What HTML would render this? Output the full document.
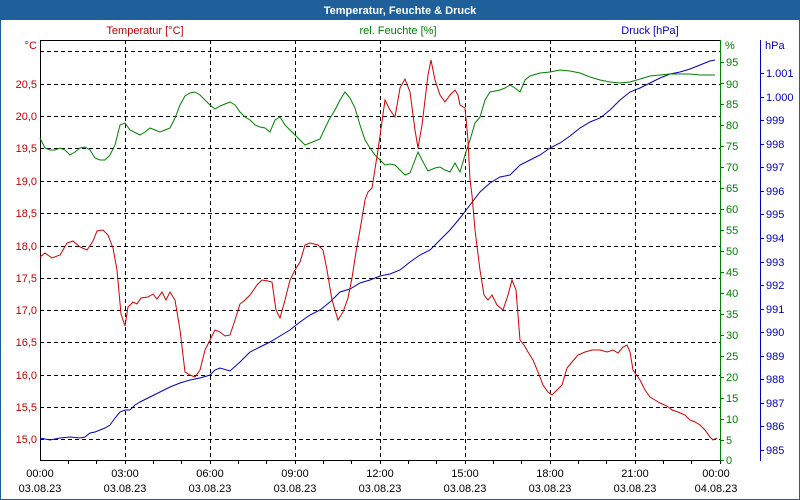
<!DOCTYPE html>
<html><head><meta charset="utf-8"><style>
html,body{margin:0;padding:0;background:#fff}
svg{display:block;font-family:"Liberation Sans",sans-serif;font-size:11px}
</style></head><body>
<svg width="800" height="500" viewBox="0 0 800 500" xmlns="http://www.w3.org/2000/svg">
<rect x="0" y="0" width="800" height="500" fill="#fff"/>
<rect x="0.5" y="0.5" width="799" height="499" fill="none" stroke="#1f5f9a"/>
<rect x="0" y="0" width="800" height="20" fill="#1f5f9a"/>
<text x="400" y="14" text-anchor="middle" fill="#fff" font-weight="bold" font-size="11">Temperatur, Feuchte &amp; Druck</text>

<text x="145" y="34" text-anchor="middle" fill="#c00000">Temperatur [°C]</text>
<text x="398" y="34" text-anchor="middle" fill="#008000">rel. Feuchte [%]</text>
<text x="650" y="34" text-anchor="middle" fill="#0000c0">Druck [hPa]</text>
<text x="37" y="49" text-anchor="end" fill="#c00000">°C</text>
<text x="725" y="49" fill="#008000">%</text>
<text x="765" y="49" fill="#0000c0">hPa</text>

<g stroke="#000" stroke-dasharray="4,3" stroke-width="1">
<line x1="40" y1="51.5" x2="720" y2="51.5"/>
<line x1="40" y1="84.5" x2="720" y2="84.5"/>
<line x1="40" y1="116.5" x2="720" y2="116.5"/>
<line x1="40" y1="148.5" x2="720" y2="148.5"/>
<line x1="40" y1="181.5" x2="720" y2="181.5"/>
<line x1="40" y1="213.5" x2="720" y2="213.5"/>
<line x1="40" y1="246.5" x2="720" y2="246.5"/>
<line x1="40" y1="278.5" x2="720" y2="278.5"/>
<line x1="40" y1="310.5" x2="720" y2="310.5"/>
<line x1="40" y1="342.5" x2="720" y2="342.5"/>
<line x1="40" y1="375.5" x2="720" y2="375.5"/>
<line x1="40" y1="407.5" x2="720" y2="407.5"/>
<line x1="40" y1="439.5" x2="720" y2="439.5"/>
<line x1="125.5" y1="40" x2="125.5" y2="460"/>
<line x1="210.5" y1="40" x2="210.5" y2="460"/>
<line x1="295.5" y1="40" x2="295.5" y2="460"/>
<line x1="380.5" y1="40" x2="380.5" y2="460"/>
<line x1="465.5" y1="40" x2="465.5" y2="460"/>
<line x1="550.5" y1="40" x2="550.5" y2="460"/>
<line x1="635.5" y1="40" x2="635.5" y2="460"/>
</g>
<g stroke="#000" stroke-width="1">
<line x1="40" y1="40.5" x2="720" y2="40.5"/>
<line x1="40.5" y1="40" x2="40.5" y2="460"/>
<line x1="40" y1="460.5" x2="720" y2="460.5"/>
<path d="M68.5 460v4M96.5 460v4M125.5 460v4M153.5 460v4M181.5 460v4M210.5 460v4M238.5 460v4M266.5 460v4M295.5 460v4M323.5 460v4M351.5 460v4M380.5 460v4M408.5 460v4M436.5 460v4M465.5 460v4M493.5 460v4M521.5 460v4M550.5 460v4M578.5 460v4M606.5 460v4M635.5 460v4M663.5 460v4M691.5 460v4M720.5 460v4"/>
</g>
<line x1="720.5" y1="40" x2="720.5" y2="461" stroke="#008000"/>
<line x1="760.5" y1="40" x2="760.5" y2="461" stroke="#0000c0"/>

<g fill="#c00000" text-anchor="end">
<text x="37" y="88">20,5</text><text x="37" y="120">20,0</text><text x="37" y="152">19,5</text>
<text x="37" y="185">19,0</text><text x="37" y="217">18,5</text><text x="37" y="250">18,0</text>
<text x="37" y="282">17,5</text><text x="37" y="314">17,0</text><text x="37" y="346">16,5</text>
<text x="37" y="379">16,0</text><text x="37" y="411">15,5</text><text x="37" y="443">15,0</text>
</g>

<g fill="#008000">
<text x="726" y="66">95</text><text x="726" y="88">90</text><text x="726" y="108">85</text>
<text x="726" y="129">80</text><text x="726" y="150">75</text><text x="726" y="171">70</text>
<text x="726" y="192">65</text><text x="726" y="213">60</text><text x="726" y="234">55</text>
<text x="726" y="255">50</text><text x="726" y="276">45</text><text x="726" y="297">40</text>
<text x="726" y="318">35</text><text x="726" y="339">30</text><text x="726" y="360">25</text>
<text x="726" y="381">20</text><text x="726" y="402">15</text><text x="726" y="423">10</text>
<text x="726" y="444">5</text><text x="726" y="464">0</text>
</g>
<path stroke="#008000" d="M720 62.5h4M720 83.5h4M720 104.5h4M720 125.5h4M720 146.5h4M720 167.5h4M720 188.5h4M720 209.5h4M720 230.5h4M720 251.5h4M720 272.5h4M720 293.5h4M720 314.5h4M720 335.5h4M720 356.5h4M720 377.5h4M720 398.5h4M720 419.5h4M720 440.5h4M720 460.5h4"/>

<g fill="#0000c0">
<text x="766" y="77">1.001</text><text x="766" y="101">1.000</text><text x="766" y="124">999</text>
<text x="766" y="148">998</text><text x="766" y="171">997</text><text x="766" y="195">996</text>
<text x="766" y="218">995</text><text x="766" y="242">994</text><text x="766" y="266">993</text>
<text x="766" y="289">992</text><text x="766" y="313">991</text><text x="766" y="336">990</text>
<text x="766" y="360">989</text><text x="766" y="383">988</text><text x="766" y="407">987</text>
<text x="766" y="430">986</text><text x="766" y="454">985</text>
</g>
<path stroke="#0000c0" d="M760 73.5h4M760 97.5h4M760 120.5h4M760 144.5h4M760 167.5h4M760 191.5h4M760 214.5h4M760 238.5h4M760 262.5h4M760 285.5h4M760 309.5h4M760 332.5h4M760 356.5h4M760 379.5h4M760 403.5h4M760 426.5h4M760 450.5h4"/>

<g fill="#000" text-anchor="middle">
<text x="40" y="477">00:00</text><text x="40" y="492">03.08.23</text>
<text x="125" y="477">03:00</text><text x="125" y="492">03.08.23</text>
<text x="210" y="477">06:00</text><text x="210" y="492">03.08.23</text>
<text x="295" y="477">09:00</text><text x="295" y="492">03.08.23</text>
<text x="380" y="477">12:00</text><text x="380" y="492">03.08.23</text>
<text x="465" y="477">15:00</text><text x="465" y="492">03.08.23</text>
<text x="550" y="477">18:00</text><text x="550" y="492">03.08.23</text>
<text x="635" y="477">21:00</text><text x="635" y="492">03.08.23</text>
<text x="716" y="477">00:00</text><text x="716" y="492">04.08.23</text>
</g>

<polyline fill="none" stroke="#0000c0" stroke-width="1" points="40,438 50,440 60,438 70,437 80,438 85,437 90,433 95,432 100,430 105,428 110,425 115,418 120,412 125,410 130,410 135,405 140,402 150,397 160,392 170,387 180,383 190,380 200,378 210,375 215,370 220,368 230,371 240,362 250,352 260,347 270,342 280,336 290,330 300,322 310,315 320,310 330,302 340,292 350,289 360,283 370,280 380,276 390,274 400,270 410,262 420,255 430,250 440,240 450,230 460,218 470,205 480,192 490,183 500,177 510,175 520,165 530,160 540,155 550,148 560,143 570,136 580,128 590,122 600,118 610,110 620,100 630,92 640,88 650,83 660,78 670,74 680,72 690,69 700,65 710,61 715,60"/>

<polyline fill="none" stroke="#008000" stroke-width="1" points="40,138 45,148 50,150 55,150 60,148 65,150 70,155 75,152 80,148 85,147 90,150 95,158 100,160 105,160 110,155 115,145 120,125 125,123 130,130 140,135 145,132 150,128 155,130 160,132 165,130 170,128 175,118 180,105 185,96 190,93 195,92 200,95 205,100 210,105 215,109 220,106 225,104 230,102 235,105 240,112 245,117 250,120 255,125 260,127 265,128 270,132 275,120 280,117 285,125 290,130 295,135 300,140 305,145 310,143 315,141 320,139 325,128 330,118 335,110 340,100 345,92 350,98 355,108 360,125 365,140 370,148 375,155 385,165 390,164 395,165 400,170 405,175 410,173 415,160 418,152 422,160 428,171 435,168 440,167 445,170 450,172 455,163 460,172 465,155 470,140 475,123 480,117 485,100 490,92 500,90 505,88 510,85 515,88 520,92 525,80 530,76 540,73 550,72 560,70 570,71 580,73 590,77 600,80 610,82 620,83 630,82 640,79 650,76 660,75 670,74 680,74 690,74 700,75 715,75"/>

<polyline fill="none" stroke="#d00000" stroke-width="1" points="40,257 45,253 52,258 60,255 67,243 73,241 80,247 87,250 93,241 97,231 103,230 108,235 113,248 117,270 121,314 125,326 128,307 133,302 137,304 141,298 148,297 153,294 157,299 162,292 166,300 170,292 175,300 180,330 185,372 190,375 195,377 200,370 205,350 210,340 215,330 220,332 225,336 230,335 235,320 240,304 245,300 250,295 257,285 262,280 268,281 272,282 276,310 280,318 285,300 290,280 295,270 300,262 305,245 310,243 318,245 323,250 327,270 332,300 338,320 343,312 348,298 352,278 356,252 360,230 365,200 368,192 372,188 378,150 385,100 390,110 395,117 400,88 405,79 410,92 415,130 418,148 422,125 425,100 428,75 431,60 435,80 440,95 445,102 450,95 455,90 458,95 460,105 465,108 468,140 470,180 472,195 475,230 480,270 484,295 488,300 492,295 497,305 503,310 508,295 512,280 516,290 520,340 524,345 528,352 533,360 538,372 543,385 548,392 552,395 557,390 562,385 567,368 572,362 578,355 585,352 592,350 600,350 607,352 613,350 618,353 623,347 627,345 630,352 633,370 640,380 645,390 650,397 655,400 660,403 667,406 672,410 678,412 685,415 690,420 695,422 700,425 705,430 710,437 713,440 717,438"/>
</svg>
</body></html>
